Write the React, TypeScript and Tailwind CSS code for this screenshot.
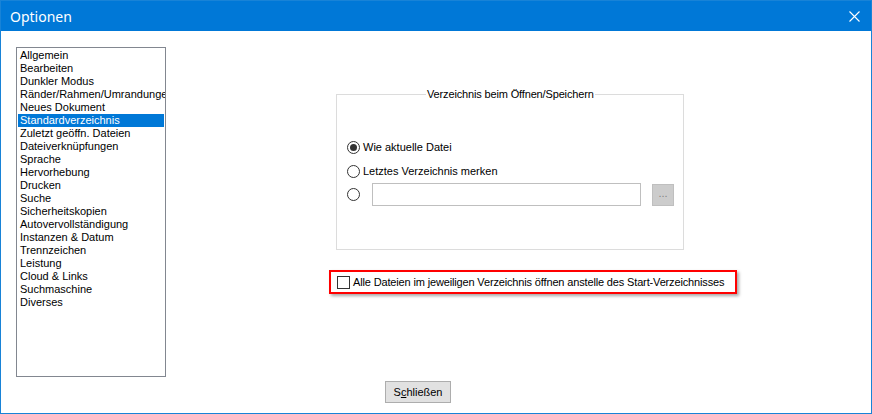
import React from "react";

const items = [
  "Allgemein",
  "Bearbeiten",
  "Dunkler Modus",
  "Ränder/Rahmen/Umrandungen",
  "Neues Dokument",
  "Standardverzeichnis",
  "Zuletzt geöffn. Dateien",
  "Dateiverknüpfungen",
  "Sprache",
  "Hervorhebung",
  "Drucken",
  "Suche",
  "Sicherheitskopien",
  "Autovervollständigung",
  "Instanzen & Datum",
  "Trennzeichen",
  "Leistung",
  "Cloud & Links",
  "Suchmaschine",
  "Diverses",
];

const Radio = ({ checked }: { checked?: boolean }) => (
  <span className="w-[13px] h-[13px] rounded-full border border-[#333333] bg-white flex items-center justify-center shrink-0">
    {checked && <span className="w-[7px] h-[7px] rounded-full bg-[#333333]" />}
  </span>
);

const App = () => {
  return (
    <div
      className="w-[872px] h-[414px] bg-white border border-[#1883d7] flex flex-col text-[11px] text-black overflow-hidden"
      style={{ fontFamily: '"Liberation Sans", Arial, sans-serif' }}
    >
      {/* Title bar */}
      <div className="h-[30px] bg-[#0078d7] flex items-center justify-between pl-[9px] pr-[10px] shrink-0">
        <span
          className="text-white text-[14px]"
          style={{ fontFamily: '"Noto Sans", "Open Sans", sans-serif' }}
        >
          Optionen
        </span>
        <svg width="11" height="11" viewBox="0 0 11 11" className="mr-[1px]">
          <path d="M0.5 0.5 L10.5 10.5 M10.5 0.5 L0.5 10.5" stroke="white" strokeWidth="1.1" />
        </svg>
      </div>

      {/* Body */}
      <div className="flex flex-col pl-[15px] pt-[16px]">
        <div className="flex">
          {/* List box */}
          <div className="w-[150px] h-[330px] border border-[#828790] p-[1px] overflow-hidden shrink-0">
            {items.map((item) => (
              <div
                key={item}
                className={
                  "h-[13px] leading-[13px] pl-[2px] whitespace-nowrap " +
                  (item === "Standardverzeichnis" ? "bg-[#0078d7] text-white" : "")
                }
              >
                {item}
              </div>
            ))}
          </div>

          {/* Right side */}
          <div className="flex flex-col">
            {/* Group box */}
            <div className="relative ml-[170px] mt-[47px] w-[348px] h-[156px] border border-[#dcdcdc]">
              <span className="absolute -top-[8px] left-[89px] bg-white px-[1px] leading-[14px] whitespace-nowrap tracking-[-0.15px]">
                Verzeichnis beim Öffnen/Speichern
              </span>
              <div className="flex flex-col pl-[10px] pt-[45px]">
                <div className="flex items-center gap-[3px] h-[14px]">
                  <Radio checked />
                  <span>Wie aktuelle Datei</span>
                </div>
                <div className="flex items-center gap-[3px] h-[14px] mt-[10px]">
                  <Radio />
                  <span>Letztes Verzeichnis merken</span>
                </div>
                <div className="flex items-center mt-[5px]">
                  <Radio />
                  <div className="ml-[12px] w-[269px] h-[23px] border border-[#bfbfbf] bg-white" />
                  <div className="ml-[11px] w-[22px] h-[22px] border border-[#bfbfbf] bg-[#cccccc] text-[#838383] flex items-center justify-center leading-none pb-[3px]">
                    ...
                  </div>
                </div>
              </div>
            </div>

            {/* Highlighted checkbox */}
            <div className="ml-[163px] mt-[20px] w-[408px] h-[24px] border-2 border-[#ff0000] shadow-[2px_2px_3px_rgba(0,0,0,0.35)] flex items-center pl-[6px]">
              <span className="w-[13px] h-[13px] border border-[#333333] bg-white shrink-0" />
              <span className="ml-[3px] whitespace-nowrap tracking-[-0.15px]">
                Alle Dateien im jeweiligen Verzeichnis öffnen anstelle des Start-Verzeichnisses
              </span>
            </div>
          </div>
        </div>

        {/* Footer */}
        <div className="flex mt-[4px] ml-[369px]">
          <button className="w-[66px] h-[22px] bg-[#e1e1e1] border border-[#adadad] text-[11px] leading-none">
            S<span className="underline">c</span>hließen
          </button>
        </div>
      </div>
    </div>
  );
};

export default App;
